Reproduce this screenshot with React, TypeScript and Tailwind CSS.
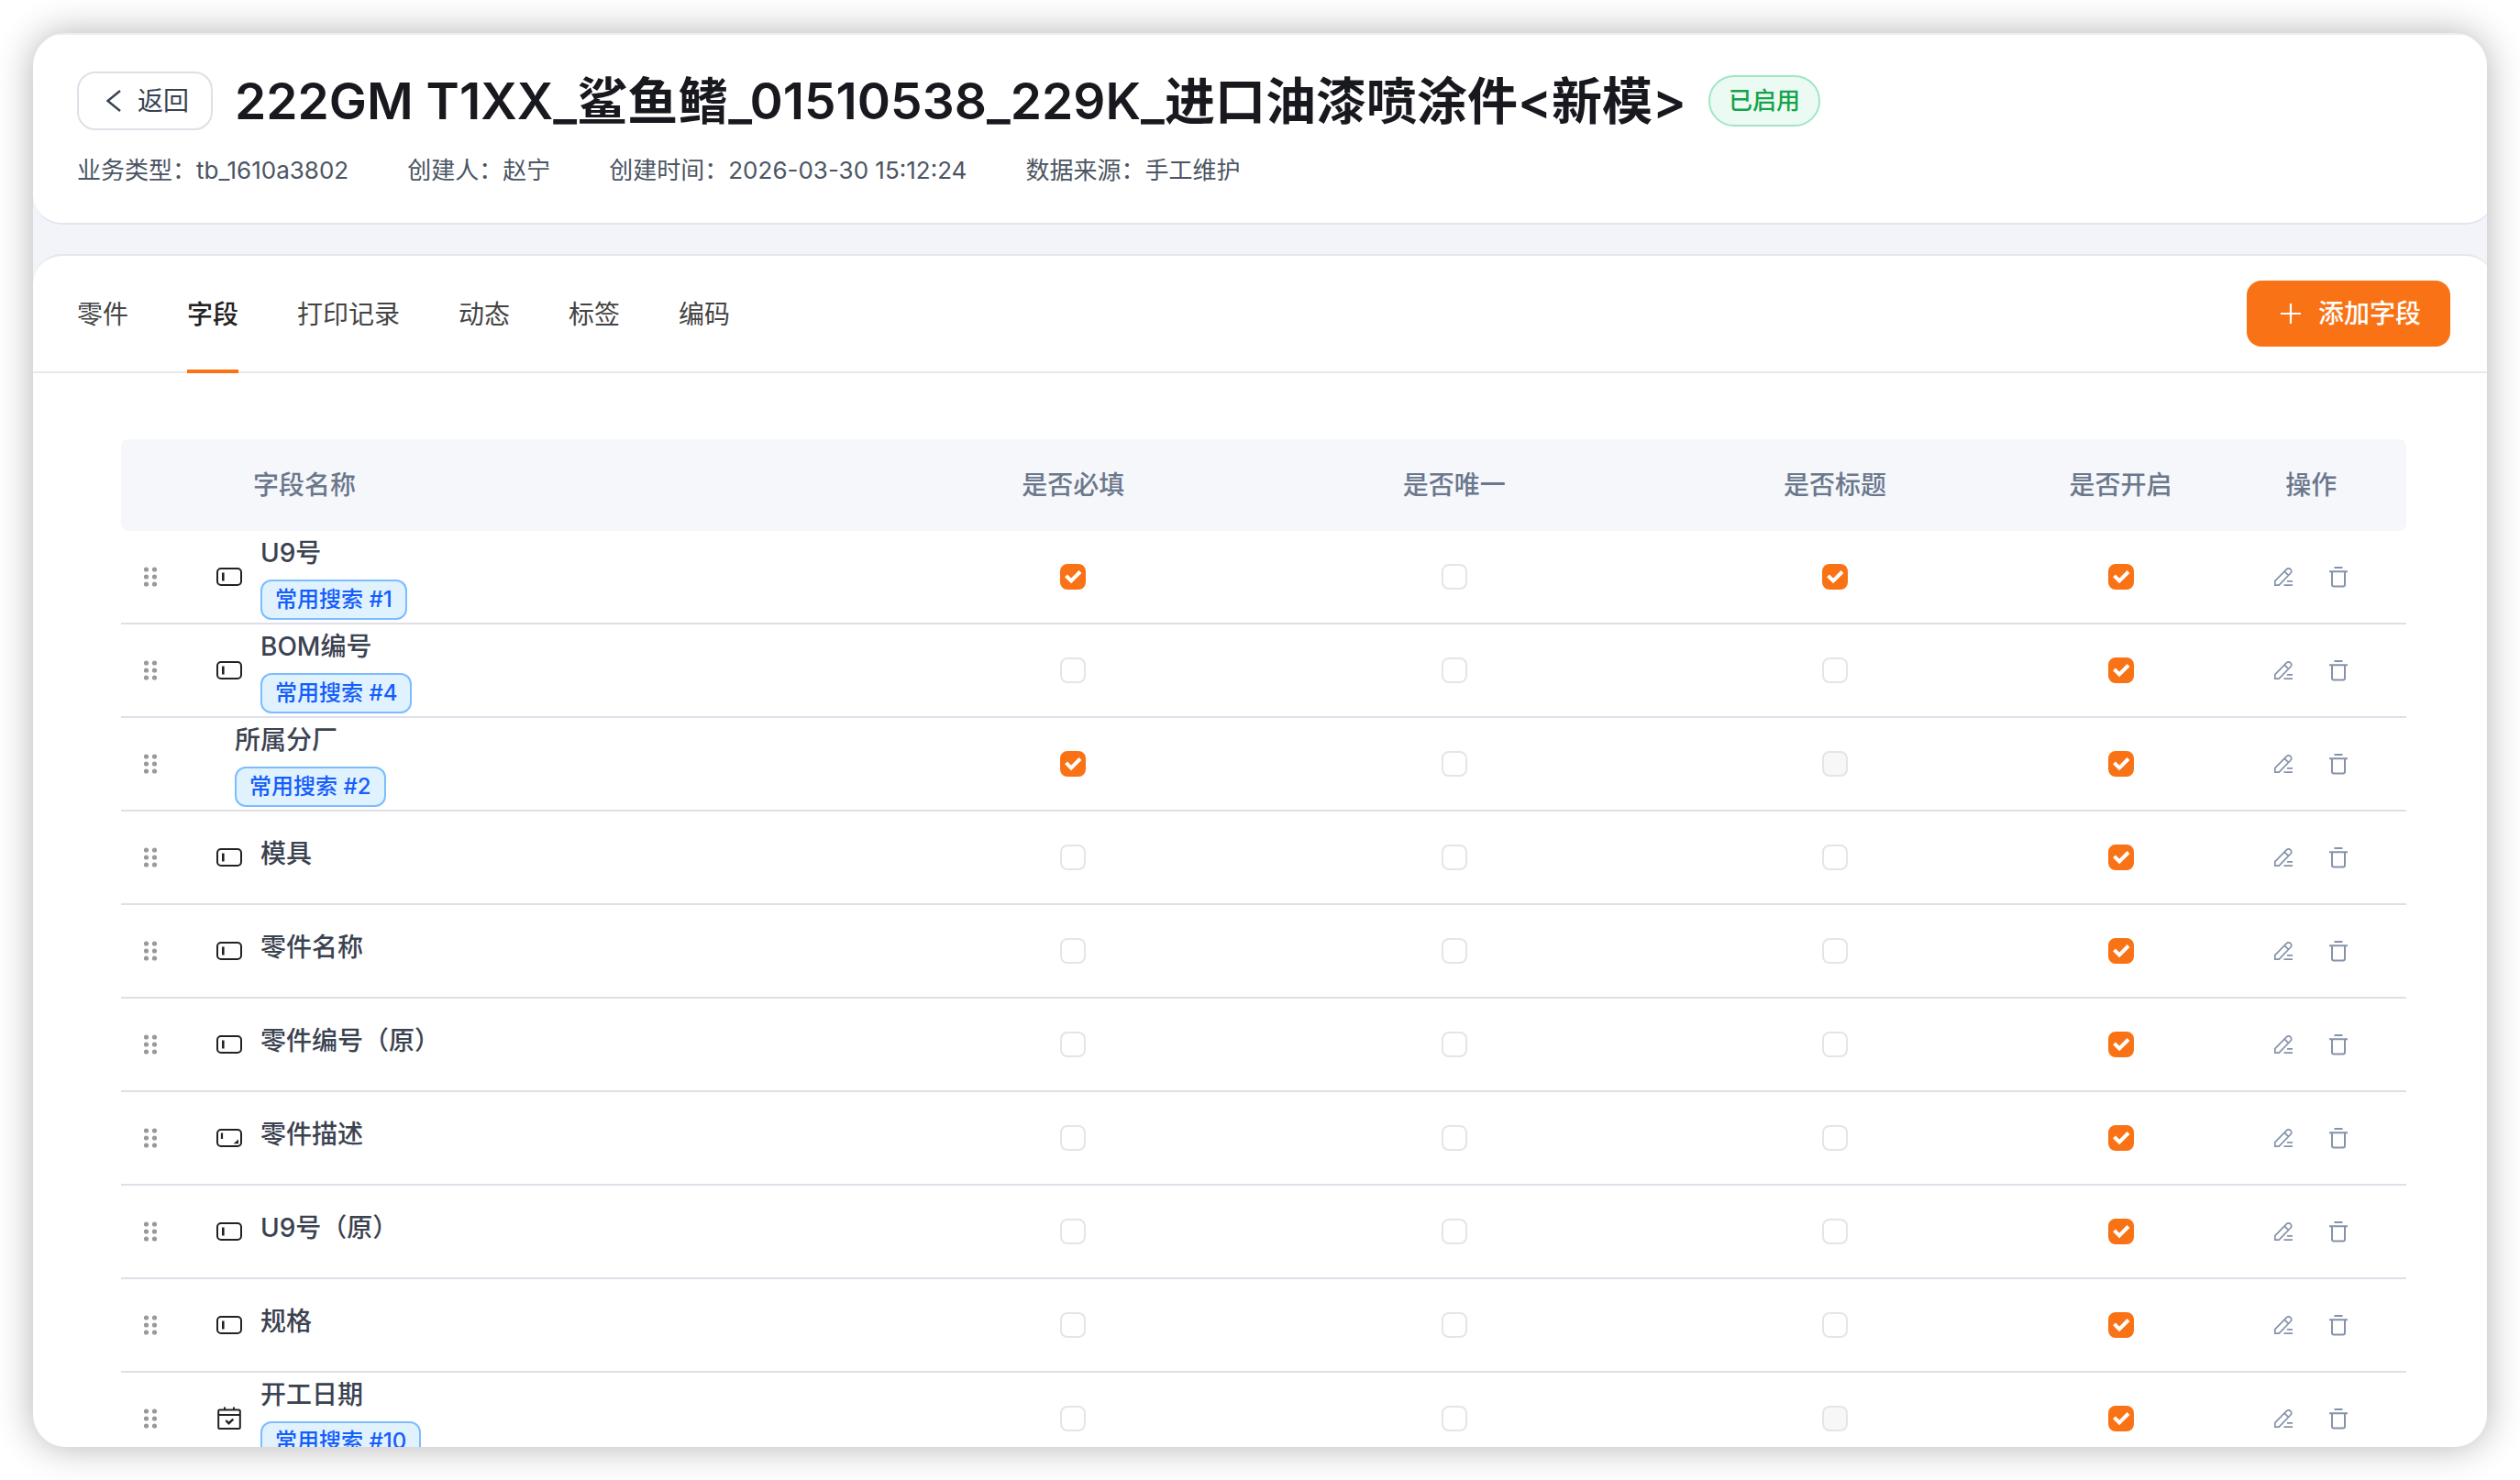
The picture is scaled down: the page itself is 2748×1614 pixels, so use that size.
import { useState } from "react";
import clsx from "clsx";

type Field = {
    name: string;
    icon?: "input" | "textarea" | "date";
    search?: number;
    required?: boolean;
    title?: boolean;
    titleDisabled?: boolean;
};

const meta = [
    { label: "业务类型", value: "tb_1610a3802" },
    { label: "创建人", value: "赵宁" },
    { label: "创建时间", value: "2026-03-30 15:12:24" },
    { label: "数据来源", value: "手工维护" },
];

const tabs = ["零件", "字段", "打印记录", "动态", "标签", "编码"];

const fields: Field[] = [
    { name: "U9号", icon: "input", search: 1, required: true, title: true },
    { name: "BOM编号", icon: "input", search: 4 },
    { name: "所属分厂", search: 2, required: true, titleDisabled: true },
    { name: "模具", icon: "input" },
    { name: "零件名称", icon: "input" },
    { name: "零件编号（原）", icon: "input" },
    { name: "零件描述", icon: "textarea" },
    { name: "U9号（原）", icon: "input" },
    { name: "规格", icon: "input" },
    { name: "开工日期", icon: "date", search: 10, titleDisabled: true },
];

function DragIcon() {
    return (
        <svg width="16" height="24" viewBox="0 0 16 24" fill="#999999">
            {[4, 12, 20].map((y) => (
                <g key={y}>
                    <circle cx="3.5" cy={y} r="2.6" />
                    <circle cx="12.5" cy={y} r="2.6" />
                </g>
            ))}
        </svg>
    );
}

function FieldIcon({ type }: { type: "input" | "textarea" | "date" }) {
    if (type === "date") {
        return (
            <svg width="28" height="28" viewBox="0 0 28 28" fill="none" stroke="#222222" strokeWidth="2">
                <rect x="2.2" y="4.5" width="23.6" height="20.5" rx="1.5" />
                <path d="M2.2 10h23.6M9 1.5v3M19 1.5v3" />
                <path d="M10.3 16l3.2 3.2 4.8-4.6" strokeWidth="2.4" />
            </svg>
        );
    }
    return (
        <svg width="28" height="28" viewBox="0 0 28 28" fill="none" stroke="#222222" strokeWidth="2">
            <rect x="1" y="5" width="26" height="18" rx="4" />
            {type === "input" ? (
                <path d="M7.3 9.5v9" strokeWidth="2.6" />
            ) : (
                <>
                    <path d="M6 8.5v6.5" strokeWidth="2.2" />
                    <path d="M24 15.5v4.7h-5.4z" fill="#222222" stroke="none" />
                </>
            )}
        </svg>
    );
}

function Check({ label, checked = false, disabled = false }: { label: string; checked?: boolean; disabled?: boolean }) {
    const [on, setOn] = useState(checked);

    return (
        <label className="relative mx-auto block size-7">
            <input
                type="checkbox"
                aria-label={label}
                checked={on}
                disabled={disabled}
                onChange={() => setOn(!on)}
                className="peer block size-7 appearance-none rounded-lg border-2 border-[#e5e5e5] bg-white checked:border-[#f97316] checked:bg-[#f97316] disabled:bg-[#f7f7f8]"
            />
            <svg
                viewBox="0 0 28 28"
                className="pointer-events-none absolute inset-0 hidden size-7 peer-checked:block"
                fill="none"
                stroke="#ffffff"
                strokeWidth="4"
            >
                <path d="M6.5 12.8l5.6 5.6L22 8.5" />
            </svg>
        </label>
    );
}

export default function App() {
    const [active, setActive] = useState("字段");

    return (
        <div className="h-screen overflow-hidden bg-white p-9 font-[Inter,'Noto_Sans_CJK_SC',sans-serif]">
            <div className="h-full overflow-hidden rounded-[36px] bg-[#f3f4fa] shadow-[0_0_40px_rgba(0,0,0,0.3)]">
                {/* Header */}
                <header className="-mr-2 rounded-b-[32px] border-y-2 border-t-[#ededf0] border-b-[#e2e6eb] bg-white px-12 pt-10 pb-[37px]">
                    <div className="flex items-center gap-6">
                        <button className="flex h-16 items-center gap-3 rounded-[20px] border-2 border-[#dfdfe8] px-6 text-[28px] text-[#374151]">
                            <svg width="28" height="28" viewBox="0 0 28 28" fill="none" stroke="currentColor" strokeWidth="2.4">
                                <path d="M21 3L7.5 14 21 25" />
                            </svg>
                            返回
                        </button>
                        <h1 className="text-[55px] leading-[64px] font-semibold text-[#18181f]">
                            222GM T1XX_鲨鱼鳍_01510538_229K_进口油漆喷涂件&lt;新模&gt;
                        </h1>
                        <span className="rounded-full border-2 border-[#a0e6c5] bg-[#ebfaf3] px-5 py-2 text-[26px] leading-9 font-medium text-[#16a34a]">
                            已启用
                        </span>
                    </div>
                    <div className="mt-6 flex gap-16 text-[26px] leading-10 text-[#4b5563]">
                        {meta.map((item) => (
                            <span key={item.label}>
                                {item.label}：{item.value}
                            </span>
                        ))}
                    </div>
                </header>

                {/* Fields */}
                <main className="mt-8 -mr-2 h-full rounded-t-[32px] border-t-2 border-[#e2e6eb] bg-white">
                    <div className="flex h-32 items-center justify-between border-b-2 border-[#e9e9e9] px-12">
                        <nav className="flex h-full gap-16">
                            {tabs.map((tab) => (
                                <button
                                    key={tab}
                                    onClick={() => setActive(tab)}
                                    className={clsx(
                                        "-mb-0.5 border-y-4 border-t-transparent text-[28px]",
                                        active === tab
                                            ? "border-b-[#f97316] font-medium text-[#222222]"
                                            : "border-b-transparent text-[#444444]"
                                    )}
                                >
                                    {tab}
                                </button>
                            ))}
                        </nav>
                        <button className="flex h-[72px] items-center gap-3.5 rounded-2xl bg-[#f97316] px-8 text-[28px] font-medium text-white">
                            <svg width="32" height="28" viewBox="0 0 32 28" fill="none" stroke="currentColor" strokeWidth="2.2">
                                <path d="M5 14h22M16 3v22" />
                            </svg>
                            添加字段
                        </button>
                    </div>

                    <div className="px-24 pt-[72px]">
                        <table className="w-full table-fixed border-separate border-spacing-0 text-[28px]">
                            <colgroup>
                                <col className="w-16" />
                                <col />
                                <col className="w-1/6" />
                                <col className="w-1/6" />
                                <col className="w-1/6" />
                                <col className="w-1/12" />
                                <col className="w-1/12" />
                            </colgroup>
                            <thead>
                                <tr className="h-[100px] text-[#6b778c] [&>th]:bg-[#f5f7fb] [&>th]:font-medium">
                                    <th className="rounded-l-lg" />
                                    <th className="pl-20 text-left">字段名称</th>
                                    <th>是否必填</th>
                                    <th>是否唯一</th>
                                    <th>是否标题</th>
                                    <th>是否开启</th>
                                    <th className="rounded-r-lg">操作</th>
                                </tr>
                            </thead>
                            <tbody>
                                {fields.map((field) => (
                                    <tr key={field.name} className="h-[102px] text-center [&>td]:border-b-2 [&>td]:border-[#dfdfe8]">
                                        <td>
                                            <span className="flex justify-center">
                                                <DragIcon />
                                            </span>
                                        </td>
                                        <td className="text-left">
                                            <div className="flex items-center pl-10">
                                                {field.icon && <FieldIcon type={field.icon} />}
                                                <div className="ml-5">
                                                    <div className="mb-2 leading-[42px] font-medium text-[#3b4250]">{field.name}</div>
                                                    {field.search && (
                                                        <span className="block w-fit rounded-xl border-2 border-[#7cbcff] bg-[#e0f2fe] px-3.5 text-2xl leading-10 font-medium text-[#155dfc]">
                                                            常用搜索 #{field.search}
                                                        </span>
                                                    )}
                                                </div>
                                            </div>
                                        </td>
                                        <td>
                                            <Check label={`${field.name} 是否必填`} checked={field.required} />
                                        </td>
                                        <td>
                                            <Check label={`${field.name} 是否唯一`} />
                                        </td>
                                        <td>
                                            <Check label={`${field.name} 是否标题`} checked={field.title} disabled={field.titleDisabled} />
                                        </td>
                                        <td>
                                            <Check label={`${field.name} 是否开启`} checked />
                                        </td>
                                        <td>
                                            <div className="flex justify-center gap-9 text-[#8592a9]">
                                                <button aria-label="编辑">
                                                    <svg width="24" height="24" viewBox="0 0 24 24" fill="none" stroke="currentColor" strokeWidth="1.7">
                                                        <path d="M2.8 21.2v-4.6L15.6 3.7a2.8 2.8 0 0 1 4 0l.3.3a2.8 2.8 0 0 1 0 4L7.2 21.2zM13.2 6.2l4.4 4.4M16 16.8h6M12.5 21.2H22" />
                                                    </svg>
                                                </button>
                                                <button aria-label="删除">
                                                    <svg width="24" height="24" viewBox="0 0 24 24" fill="none" stroke="currentColor" strokeWidth="2">
                                                        <path d="M7.5 2h9M2 6.2h20M5 6.2v14.3a2 2 0 0 0 2 2h10a2 2 0 0 0 2-2V6.2" />
                                                    </svg>
                                                </button>
                                            </div>
                                        </td>
                                    </tr>
                                ))}
                            </tbody>
                        </table>
                    </div>
                </main>
            </div>
        </div>
    );
}
